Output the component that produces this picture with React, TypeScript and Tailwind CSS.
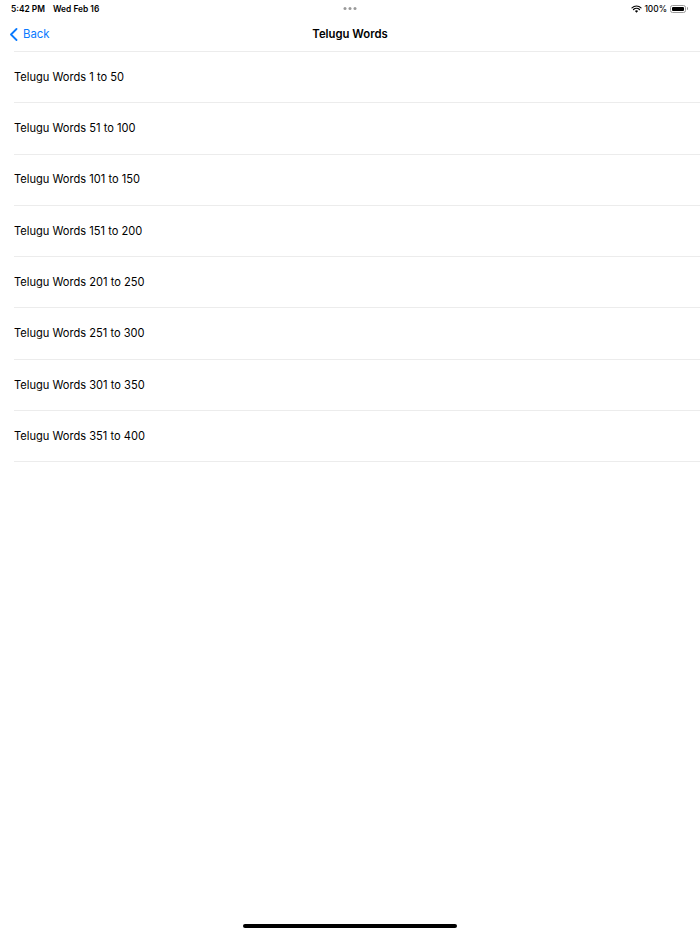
import React from "react";

const rows = [
  "Telugu Words 1 to 50",
  "Telugu Words 51 to 100",
  "Telugu Words 101 to 150",
  "Telugu Words 151 to 200",
  "Telugu Words 201 to 250",
  "Telugu Words 251 to 300",
  "Telugu Words 301 to 350",
  "Telugu Words 351 to 400",
];

export default function App() {
  return (
    <div
      className="relative w-[700px] h-[934px] bg-white overflow-hidden text-black"
      style={{ fontFamily: "Inter, 'Liberation Sans', sans-serif" }}
    >
      {/* status bar */}
      <div className="relative h-[18px] flex items-center pl-[11px] pr-[12px] text-[8.4px] font-semibold">
        <span>5:42 PM</span>
        <span className="ml-[8px]">Wed Feb 16</span>
        <div className="absolute left-1/2 -translate-x-1/2 top-[7px] flex gap-[2px]">
          <span className="w-[3px] h-[3px] rounded-full bg-[#9a9a9a]" />
          <span className="w-[3px] h-[3px] rounded-full bg-[#9a9a9a]" />
          <span className="w-[3px] h-[3px] rounded-full bg-[#9a9a9a]" />
        </div>
        <div className="ml-auto flex items-center gap-[2px]">
          <svg width="11" height="8" viewBox="0 0 12 9">
            <path d="M6 8.6 L4.2 6.7 A2.6 2.6 0 0 1 7.8 6.7 Z" fill="#000" />
            <path d="M2.6 5.1 A4.9 4.9 0 0 1 9.4 5.1" stroke="#000" strokeWidth="1.3" fill="none" strokeLinecap="round" />
            <path d="M0.9 3.2 A7.4 7.4 0 0 1 11.1 3.2" stroke="#000" strokeWidth="1.3" fill="none" strokeLinecap="round" />
          </svg>
          <span className="font-medium">100%</span>
          <div className="flex items-center ml-[1px]">
            <div className="w-[16px] h-[8px] rounded-[2.5px] border border-[#9a9a9a] p-[1px]">
              <div className="w-full h-full rounded-[1px] bg-black" />
            </div>
            <div className="w-[1.5px] h-[3px] bg-[#9a9a9a] rounded-r-sm ml-[0.5px]" />
          </div>
        </div>
      </div>

      {/* nav bar */}
      <div className="relative h-[33px] flex items-center">
        <div className="flex items-center pl-[9px] text-[#0a7aff] text-[11.4px]">
          <svg width="9" height="13" viewBox="0 0 9 13" className="mr-[5px]">
            <path d="M7.5 1 L2 6.5 L7.5 12" stroke="#0a7aff" strokeWidth="1.8" fill="none" strokeLinecap="round" strokeLinejoin="round" />
          </svg>
          <span>Back</span>
        </div>
        <div className="absolute left-1/2 -translate-x-1/2 text-[11.3px] font-semibold">Telugu Words</div>
      </div>

      {/* list */}
      <div className="pl-[14px]">
        <div className="h-px bg-[#ececec]" />
        {rows.map((r) => (
          <div key={r}>
            <div className="h-[50.3px] flex items-center text-[11.1px]">{r}</div>
            <div className="h-px bg-[#ececec]" />
          </div>
        ))}
      </div>

      {/* home indicator */}
      <div className="absolute left-[243px] top-[924px] w-[214px] h-[4px] rounded-full bg-black" />
    </div>
  );
}
